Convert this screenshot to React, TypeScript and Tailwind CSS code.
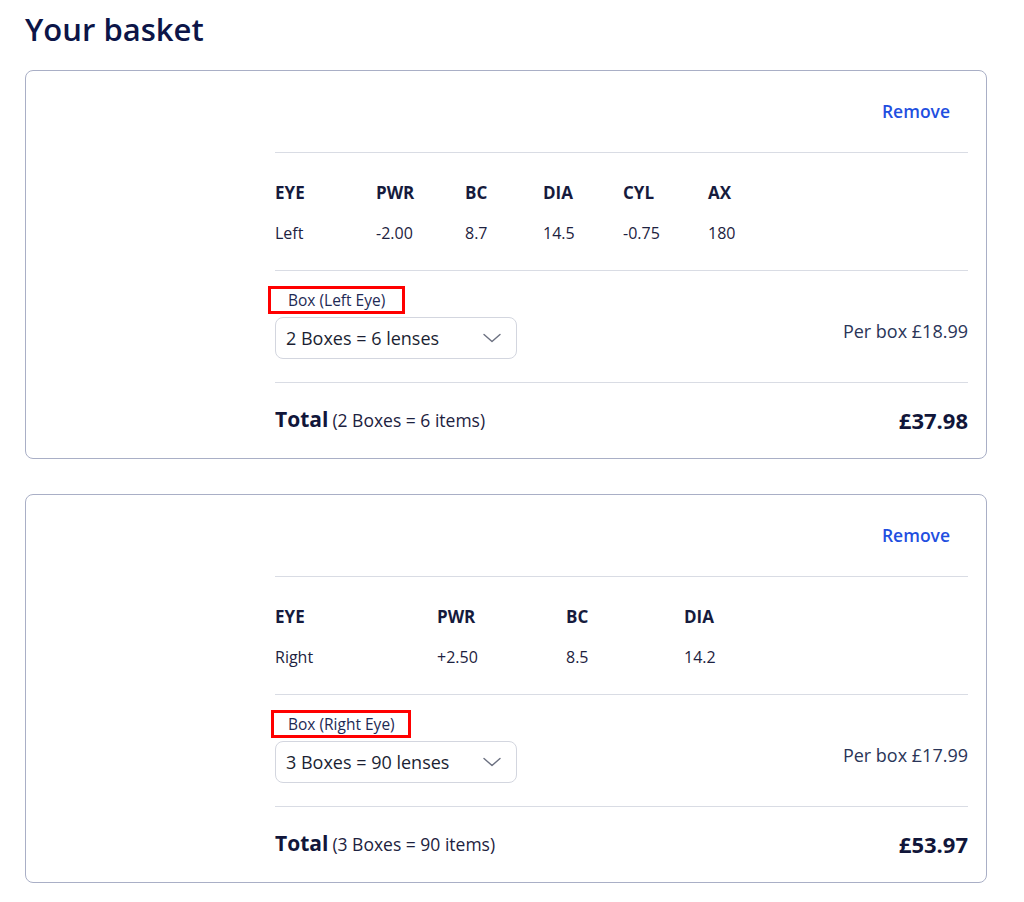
import React from "react";

type Item = {
  cols: { label: string; value: string; w?: string }[];
  boxLabel: string;
  boxClass: string;
  option: string;
  perBox: string;
  totalNote: string;
  total: string;
};

const items: Item[] = [
  {
    cols: [
      { label: "EYE", value: "Left", w: "w-[101px]" },
      { label: "PWR", value: "-2.00", w: "w-[89px]" },
      { label: "BC", value: "8.7", w: "w-[78px]" },
      { label: "DIA", value: "14.5", w: "w-[80px]" },
      { label: "CYL", value: "-0.75", w: "w-[85px]" },
      { label: "AX", value: "180" },
    ],
    boxLabel: "Box (Left Eye)",
    boxClass: "-ml-[7px] pl-[17px] pr-[17px]",
    option: "2 Boxes = 6 lenses",
    perBox: "Per box £18.99",
    totalNote: "(2 Boxes = 6 items)",
    total: "£37.98",
  },
  {
    cols: [
      { label: "EYE", value: "Right", w: "w-[162px]" },
      { label: "PWR", value: "+2.50", w: "w-[129px]" },
      { label: "BC", value: "8.5", w: "w-[118px]" },
      { label: "DIA", value: "14.2" },
    ],
    boxLabel: "Box (Right Eye)",
    boxClass: "-ml-[4px] pl-[14px] pr-[13px]",
    option: "3 Boxes = 90 lenses",
    perBox: "Per box £17.99",
    totalNote: "(3 Boxes = 90 items)",
    total: "£53.97",
  },
];

function Chevron() {
  return (
    <svg width="18" height="10" viewBox="0 0 18 10" fill="none" className="mr-[5px]">
      <path d="M1 1.5 L9 8.5 L17 1.5" stroke="#6b7080" strokeWidth="1.4" strokeLinecap="round" strokeLinejoin="round" />
    </svg>
  );
}

function Card({ item }: { item: Item }) {
  return (
    <div className="rounded-[8px] border border-[#a9afc6] pl-[249px] pr-[18px]">
      <div className="flex h-[81px] items-center justify-end">
        <span className="mr-[18px] text-[17.5px] font-semibold text-[#1f4fe0]">Remove</span>
      </div>
      <div className="border-t border-[#d9dce4] pt-[28px] pb-[25px]">
        <div className="flex text-[17px] font-bold leading-[24px] text-[#161b3d]">
          {item.cols.map((c) => (
            <div key={c.label} className={c.w ?? ""}>{c.label}</div>
          ))}
        </div>
        <div className="mt-[16px] flex text-[16px] leading-[24px] text-[#1d2240]">
          {item.cols.map((c) => (
            <div key={c.label} className={c.w ?? ""}>{c.value}</div>
          ))}
        </div>
      </div>
      <div className="border-t border-[#d9dce4] pt-[15px] pb-[23px]">
        <span className={`inline-block h-[28px] border-[3px] border-[#ff0000] text-[15.5px] leading-[22px] text-[#1e2a55] ${item.boxClass}`}>
          {item.boxLabel}
        </span>
        <div className="mt-[3px] flex items-start justify-between">
          <div className="flex h-[42px] w-[242px] items-center justify-between rounded-[8px] border border-[#d3d6df] pl-[10px] pr-[10px]">
            <span className="text-[18px] text-[#1b1f33]">{item.option}</span>
            <Chevron />
          </div>
          <span className="pt-[2px] text-[18px] leading-[24px] text-[#2a3558]">{item.perBox}</span>
        </div>
      </div>
      <div className="flex h-[76px] items-center justify-between border-t border-[#d9dce4] pb-[1px]">
        <div className="flex items-baseline gap-[4px] text-[#11163a]">
          <span className="text-[21px] font-bold">Total</span>
          <span className="text-[17.5px] text-[#1d2240]">{item.totalNote}</span>
        </div>
        <span className="text-[22px] font-bold text-[#11163a]">{item.total}</span>
      </div>
    </div>
  );
}

export default function App() {
  return (
    <div className="min-h-[902px] bg-white pl-[25px] pr-[37px] pt-[8px] font-['Open_Sans',sans-serif]">
      <h1 className="text-[31px] font-semibold leading-[42px] text-[#0c1548]">Your basket</h1>
      <div className="mt-[20px] flex flex-col gap-[35px]">
        {items.map((it) => (
          <Card key={it.boxLabel} item={it} />
        ))}
      </div>
    </div>
  );
}
